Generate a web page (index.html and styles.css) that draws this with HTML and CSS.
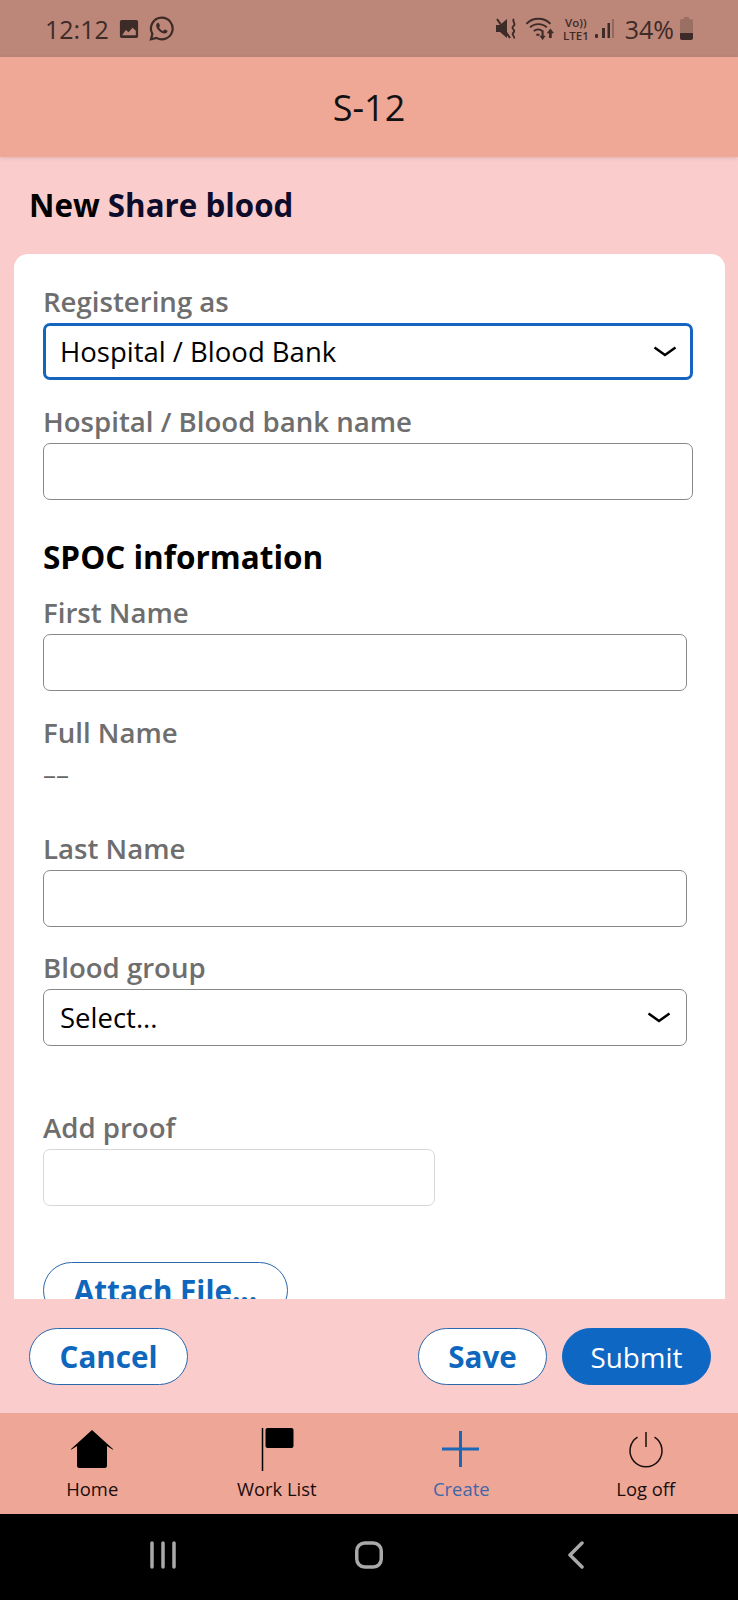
FILE: index.html
```html
<!DOCTYPE html>
<html lang="en">
<head>
    <meta charset="UTF-8">
    <meta name="viewport" content="width=device-width, initial-scale=1.0">
    <title>S-12</title>
    <link rel="stylesheet" href="styles.css">
</head>
<body>
    <div class="status-bar">
        <div class="status-left">
            <span class="clock">12:12</span>
            <svg class="icon-gallery" width="20" height="20" viewBox="0 0 22 22">
                <path fill="#3d2b28" fill-rule="evenodd" d="M3 1h16a2 2 0 0 1 2 2v16a2 2 0 0 1-2 2H3a2 2 0 0 1-2-2V3a2 2 0 0 1 2-2zM3.500 18h15v-5l-3.500-3.500-4.500 5-3-2.500z"/>
            </svg>
            <svg class="icon-whatsapp" width="25" height="25" viewBox="0 0 25 25">
                <path fill="none" stroke="#3d2b28" stroke-width="2.200" d="M12.700 1.700a10.800 10.800 0 0 0-9.300 16.200L2 23.300l5.500-1.400a10.800 10.800 0 1 0 5.200-20.200z"/>
                <path fill="#3d2b28" d="M9 6.800c-.5 0-1.800 1-1.800 2.800 0 3.300 4.600 8 8.400 8 1.800 0 2.900-1.300 2.900-2.300 0-.4-.1-.6-.3-.7l-2.200-1.100c-.3-.1-.5 0-.7.200l-.9 1.100c-.2.200-.4.200-.6.100-1.700-.7-2.900-1.800-3.700-3.300-.1-.2-.1-.4.100-.6l.6-.8c.1-.2.200-.4.100-.6L9.900 7.200c-.2-.4-.5-.4-.9-.4z"/>
            </svg>
        </div>
        <div class="status-right">
            <svg width="22" height="23" viewBox="0 0 22 23">
                <path fill="#3d2b28" d="M0 8h4l7-6v19l-7-6H0z"/>
                <path fill="none" stroke="#3d2b28" stroke-width="2" d="M1 2l13 19"/>
                <path fill="none" stroke="#3d2b28" stroke-width="1.800" d="M18 2c-3 2.500 3 4-.5 7s3 3.500 0 6.500 2 3 .5 6"/>
            </svg>
            <svg width="31" height="25" viewBox="0 0 29 24">
                <g fill="none" stroke="#3d2b28" stroke-width="1.800">
                    <path d="M1 7.500c6-6.500 17-6.500 23 0"/>
                    <path d="M4.500 11c4-4.200 12-4.200 16 0"/>
                    <path d="M8 14.500c2.500-2.200 6-2.200 8.500 0"/>
                </g>
                <path fill="#3d2b28" d="M10.500 17h3v2h-3zM15.500 14h2v5h2l-3 4-3-4h2zM24 12l3.500 4.500H25.300V21h-2.600v-4.500h-2.200z"/>
            </svg>
            <div class="volte"><span>Vo))</span><span>LTE1</span></div>
            <svg width="21" height="22" viewBox="0 0 21 22">
                <rect x="1" y="16" width="3" height="4" rx="1" fill="#3d2b28"/>
                <rect x="8" y="10" width="3" height="10" fill="#3d2b28"/>
                <rect x="13.500" y="5" width="2.500" height="15" fill="#3d2b28"/>
                <rect x="18" y="1" width="2" height="19" fill="#8f6a60"/>
            </svg>
            <span class="battery-text">34%</span>
            <svg class="icon-battery" width="15" height="23" viewBox="0 0 15 23">
                <path fill="#9a6f64" d="M5 0h5v2h2a2 2 0 0 1 2 2v12H1V4a2 2 0 0 1 2-2h2z"/>
                <path fill="#3d2b28" d="M1 16h13v5a2 2 0 0 1-2 2H3a2 2 0 0 1-2-2z"/>
            </svg>
        </div>
    </div>

    <header class="app-header">S-12</header>

    <div class="page-title"><h1><span class="title-start">New</span> Share blood</h1></div>

    <main class="card">
        <div class="field first">
            <label class="field-label">Registering as</label>
            <div class="control control-active">
                <span>Hospital / Blood Bank</span>
                <svg class="chevron" width="24" height="12" viewBox="0 0 24 12"><path d="M1.500 1.500L12 9l10.500-7.500"/></svg>
            </div>
        </div>
        <div class="field gap-27">
            <label class="field-label">Hospital / Blood bank name</label>
            <div class="control"></div>
        </div>

        <h2 class="section-title">SPOC information</h2>

        <div class="field narrow">
            <label class="field-label">First Name</label>
            <div class="control"></div>
        </div>
        <div class="field full-name">
            <label class="field-label">Full Name</label>
            <div class="readonly-value">––</div>
        </div>
        <div class="field narrow last-name">
            <label class="field-label">Last Name</label>
            <div class="control"></div>
        </div>
        <div class="field narrow gap-26">
            <label class="field-label">Blood group</label>
            <div class="control">
                <span>Select...</span>
                <svg class="chevron" width="24" height="12" viewBox="0 0 24 12"><path d="M1.500 1.500L12 9l10.500-7.500"/></svg>
            </div>
        </div>
        <div class="field proof">
            <label class="field-label">Add proof</label>
            <div class="control control-light"></div>
        </div>
        <button class="pill attach">Attach File...</button>
    </main>

    <div class="actions">
        <button class="pill cancel">Cancel</button>
        <div class="actions-right">
            <button class="pill save">Save</button>
            <button class="pill submit">Submit</button>
        </div>
    </div>

    <nav class="tab-bar">
        <div class="tab">
            <svg width="46" height="46" viewBox="0 0 46 46"><path d="M23 4L1.500 23.500h1L8 20v19.500a2.500 2.500 0 0 0 2.500 2.500h25a2.500 2.500 0 0 0 2.500-2.500V20l5.500 3.500h1z" fill="#000"/></svg>
            <span>Home</span>
        </div>
        <div class="tab">
            <svg width="46" height="46" viewBox="0 0 46 46"><path d="M8.500 2v43" stroke="#000" stroke-width="1.500"/><rect x="11.500" y="2" width="28" height="20" rx="2" fill="#000"/></svg>
            <span>Work List</span>
        </div>
        <div class="tab tab-active">
            <svg width="46" height="46" viewBox="0 0 46 46"><path d="M22.500 5v36M4 23h37" stroke="#1c66b8" stroke-width="3" fill="none"/></svg>
            <span>Create</span>
        </div>
        <div class="tab">
            <svg width="46" height="46" viewBox="0 0 46 46"><path d="M23 6v15" stroke="#1a0d0d" stroke-width="1.500"/><path d="M14.500 11.200a16 16 0 1 0 17 0" stroke="#1a0d0d" stroke-width="1.500" fill="none"/></svg>
            <span>Log off</span>
        </div>
    </nav>

    <div class="system-nav">
        <svg width="28" height="28" viewBox="0 0 28 28"><path d="M3 2v24M14 2v24M25 2v24" stroke="#a9a9a9" stroke-width="3.500" stroke-linecap="round"/></svg>
        <svg class="system-home" width="30" height="28" viewBox="0 0 30 28"><rect x="2.750" y="2" width="24.500" height="24" rx="8" stroke="#a9a9a9" stroke-width="3.500" fill="none"/></svg>
        <svg width="18" height="28" viewBox="0 0 18 28"><path d="M15 2L3 14l12 12" stroke="#a9a9a9" stroke-width="3.500" stroke-linecap="round" stroke-linejoin="round" fill="none"/></svg>
    </div>
</body>
</html>
```

FILE: styles.css
```css
* {
    box-sizing: border-box;
}
body {
    margin: 0;
    width: 738px;
    height: 1600px;
    overflow: hidden;
    display: flex;
    flex-direction: column;
    background-color: #fbcccc;
    font-family: "Open Sans", sans-serif;
}
.status-bar {
    height: 57px;
    padding: 0 44px 0 45px;
    display: flex;
    justify-content: space-between;
    align-items: center;
    background-color: #bc8678;
    color: #3d2b28;
}
.status-left, .status-right {
    display: flex;
    align-items: center;
}
.clock {
    font-size: 25px;
    margin-right: 10px;
}
.icon-gallery {
    margin-right: 10px;
}
.status-right {
    gap: 7px;
}
.volte {
    display: flex;
    flex-direction: column;
    align-items: center;
    margin-right: -2px;
    font-size: 11.500px;
    font-weight: 600;
    line-height: 16px;
    height: 26px;
}
.volte span {
    height: 13px;
    line-height: 13px;
    overflow: visible;
}
.battery-text {
    font-size: 25px;
    margin-left: 3px;
    margin-right: -2px;
}
.app-header {
    height: 100px;
    display: flex;
    align-items: center;
    justify-content: center;
    background-color: #efa796;
    box-shadow: 0 1px 4px rgba(0, 0, 0, 0.12);
    font-size: 36px;
    color: #111;
    position: relative;
}
.page-title {
    height: 97px;
    padding: 27px 0 0 29px;
}
.page-title h1 {
    margin: 0;
    font-size: 31.300px;
    line-height: 42px;
    font-weight: 700;
    color: #0d0d2b;
}
.title-start {
    color: #000;
}
.card {
    height: 1045px;
    margin: 0 13px 0 14px;
    padding: 33px 32px 0 29px;
    background-color: #fff;
    border-radius: 14px 14px 0 0;
    overflow: hidden;
}
.field-label {
    display: block;
    height: 36px;
    font-size: 27.600px;
    line-height: 28px;
    font-weight: 600;
    color: #6e6e6e;
}
.control {
    height: 57px;
    padding: 0 15px 0 16px;
    display: flex;
    align-items: center;
    justify-content: space-between;
    background-color: #fff;
    border: 1px solid #888;
    border-radius: 7px;
    font-size: 27.500px;
    color: #000;
}
.control-active {
    border: 3px solid #1565c0;
    padding: 0 13px 0 14px;
}
.control-light {
    width: 392px;
    border-color: #d8d8d8;
}
.chevron {
    fill: none;
    stroke: #000;
    stroke-width: 2.500;
}
.gap-27 {
    margin-top: 27px;
}
.gap-26 {
    margin-top: 26px;
}
.section-title {
    margin: 34px 0 0;
    height: 46px;
    font-size: 31.500px;
    line-height: 46px;
    font-weight: 700;
    color: #000;
}
.narrow {
    margin-right: 6px;
}
.section-title + .narrow {
    margin-top: 18px;
}
.full-name {
    margin-top: 27px;
}
.readonly-value {
    height: 42px;
    font-size: 26px;
    line-height: 40px;
    color: #666;
}
.last-name {
    margin-top: 38px;
}
.proof {
    margin-top: 67px;
}
.pill {
    height: 57px;
    border: 1px solid #2a68ac;
    border-radius: 29px;
    background-color: #fff;
    color: #0f67bd;
    font-family: "Open Sans", sans-serif;
    font-size: 29.600px;
    font-weight: 700;
    padding: 0;
}
.attach {
    width: 245px;
    margin-top: 56px;
}
.actions {
    height: 114px;
    padding: 29px 27px 0 29px;
    display: flex;
    justify-content: space-between;
    align-items: flex-start;
}
.actions-right {
    display: flex;
    gap: 15px;
}
.cancel {
    width: 159px;
}
.save {
    width: 129px;
}
.submit {
    width: 149px;
    background-color: #0f67c4;
    color: #fff;
    font-size: 27.800px;
    font-weight: 400;
    border-color: #0f67c4;
}
.tab-bar {
    height: 101px;
    display: flex;
    background-color: #eea797;
}
.tab {
    width: 184.500px;
    height: 101px;
    padding-top: 13px;
    display: flex;
    flex-direction: column;
    align-items: center;
    justify-content: flex-start;
    font-size: 18.400px;
    color: #1a0d0d;
}
.tab svg {
    height: 46px;
}
.tab span {
    margin-top: 4px;
    line-height: 26px;
}
.tab-active {
    color: #3f66a8;
}
.system-nav {
    height: 86px;
    background-color: #000;
    display: flex;
    align-items: center;
    justify-content: space-between;
    padding: 0 153px 4px 149px;
}
.system-home {
    margin-right: 6px;
}
```
